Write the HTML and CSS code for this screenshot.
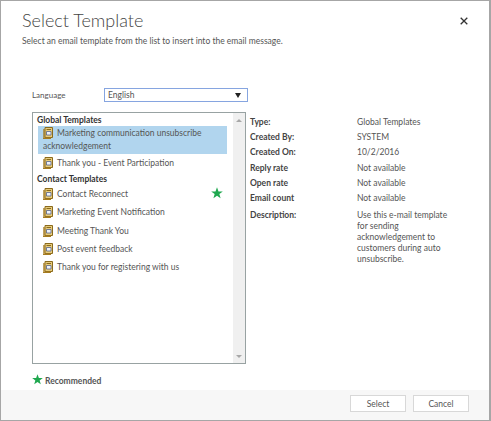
FILE: index.html
```html
<!DOCTYPE html>
<html lang="en">
<head>
    <meta charset="UTF-8">
    <title>Select Template</title>
    <link rel="stylesheet" href="styles.css">
</head>
<body>
    <svg width="0" height="0" class="defs">
        <symbol id="tpl" viewBox="0 0 10 12">
            <path d="M2 .5h7.500v10h-7.500z" fill="#e6cb7c" stroke="#8a6a1c"/>
            <path d="M3.500 2h4.500v1h-4.500z" fill="#8a6a1c"/>
            <path d="M3.500 4.500h4.500v3.500h-4.500z" fill="#eef2f8" stroke="#56638a" stroke-width=".8"/>
            <path d="M0 10.500h8v1.500h-8z" fill="#a67c20"/>
            <path d="M1 2v8.500" stroke="#a67c20" stroke-width="1.400"/>
        </symbol>
        <symbol id="star" viewBox="0 0 12 12">
            <path d="M6 .3l1.500 4.100h4.300l-3.450 2.600 1.250 4.300L6 8.700l-3.600 2.600 1.250-4.300L.2 4.400h4.300z" fill="#1fa84f"/>
        </symbol>
    </svg>
    <div class="dialog">
        <div class="main">
            <div class="head">
                <h1 class="title">Select Template</h1>
                <button class="close" type="button" aria-label="Close">
                    <svg width="8" height="8" viewBox="0 0 8 8"><path d="M.7 .7l6.600 6.600M7.300 .7L.7 7.300" stroke="#333" stroke-width="1.300"/></svg>
                </button>
            </div>
            <p class="sub">Select an email template from the list to insert into the email message.</p>
            <div class="lang">
                <span class="lang-label">Language</span>
                <div class="select"><span>English</span><span class="caret"></span></div>
            </div>
            <div class="columns">
                <div class="listbox">
                    <div class="list">
                        <div class="group">Global Templates</div>
                        <div class="item selected"><svg class="ico"><use href="#tpl"/></svg>Marketing communication unsubscribe acknowledgement</div>
                        <div class="item"><svg class="ico"><use href="#tpl"/></svg>Thank you - Event Participation</div>
                        <div class="group">Contact Templates</div>
                        <div class="item rec"><svg class="ico"><use href="#tpl"/></svg>Contact Reconnect<svg class="star-big"><use href="#star"/></svg></div>
                        <div class="item"><svg class="ico"><use href="#tpl"/></svg>Marketing Event Notification</div>
                        <div class="item"><svg class="ico"><use href="#tpl"/></svg>Meeting Thank You</div>
                        <div class="item"><svg class="ico"><use href="#tpl"/></svg>Post event feedback</div>
                        <div class="item"><svg class="ico"><use href="#tpl"/></svg>Thank you for registering with us</div>
                    </div>
                    <div class="scrollbar">
                        <span class="arrow up"></span>
                        <span class="arrow down"></span>
                    </div>
                </div>
                <div class="details">
                    <div class="key">Type:</div><div>Global Templates</div>
                    <div class="key">Created By:</div><div>SYSTEM</div>
                    <div class="key">Created On:</div><div>10/2/2016</div>
                    <div class="key">Reply rate</div><div>Not available</div>
                    <div class="key">Open rate</div><div>Not available</div>
                    <div class="key">Email count</div><div>Not available</div>
                    <div class="key desc-key">Description:</div>
                    <div class="desc">Use this e-mail template for sending acknowledgement to customers during auto unsubscribe.</div>
                </div>
            </div>
            <div class="legend"><svg class="star-legend"><use href="#star"/></svg><span>Recommended</span></div>
        </div>
        <div class="footer">
            <button class="btn" type="button">Select</button>
            <button class="btn" type="button">Cancel</button>
        </div>
    </div>
</body>
</html>
```

FILE: styles.css
```css
*{
    margin: 0;
    padding: 0;
    box-sizing: border-box;
}
html,body{
    height: 100%;
    background: #fff;
}
body{
    font-family: Lato, "Liberation Sans", sans-serif;
    font-size: 8.500px;
    color: #555;
}
.defs{
    position: absolute;
}
.dialog{
    width: 491px;
    height: 421px;
    border: 1px solid #a6a6a6;
    border-right-width: 2px;
    display: flex;
    flex-direction: column;
}
.main{
    flex: 1;
    padding: 0 0 0 21px;
    display: flex;
    flex-direction: column;
}
.head{
    height: 33px;
    padding-top: 6px;
    display: flex;
    justify-content: space-between;
}
.title{
    font-size: 18px;
    font-weight: 300;
    line-height: 27px;
    color: #444;
}
.close{
    width: 8px;
    height: 8px;
    margin: 10px 21px 0 0;
    border: 0;
    background: none;
    display: block;
}
.close svg{
    display: block;
}
.sub{
    line-height: 14px;
}
.lang{
    margin: 40px 0 0 10px;
    display: flex;
    align-items: center;
    height: 14px;
}
.lang-label{
    width: 72px;
    font-size: 8px;
}
.select{
    width: 144px;
    height: 14px;
    border: 1px solid #86a5e0;
    padding: 0 4px 0 3px;
    display: flex;
    align-items: center;
    justify-content: space-between;
}
.caret{
    width: 0;
    height: 0;
    border-left: 3px solid transparent;
    border-right: 3px solid transparent;
    border-top: 5px solid #222;
    margin-right: 2px;
}
.columns{
    margin: 10px 0 0 10px;
    display: flex;
    height: 252px;
}
.listbox{
    width: 214px;
    border: 1px solid #98a2a2;
    display: flex;
}
.list{
    flex: 1;
    padding-left: 4px;
}
.group{
    font-weight: 700;
    line-height: 15px;
    height: 13px;
    color: #333;
}
.item{
    line-height: 19px;
    height: 18.200px;
    margin: 0 6px 0 1px;
    padding-left: 5px;
    position: relative;
}
.selected{
    background: #b1d5ee;
    height: 28px;
    line-height: 13px;
    padding-top: 1px;
}
.ico{
    width: 10px;
    height: 12px;
    margin-right: 4px;
    vertical-align: -3px;
}
.star-big{
    position: absolute;
    right: 4px;
    top: 2px;
    width: 12px;
    height: 12px;
}
.scrollbar{
    width: 12px;
    background: #f0f0f0;
    display: flex;
    flex-direction: column;
    justify-content: space-between;
    align-items: center;
    padding: 6px 0 5px;
}
.arrow{
    width: 0;
    height: 0;
    border-left: 3px solid transparent;
    border-right: 3px solid transparent;
}
.up{
    border-bottom: 3px solid #a8a8a8;
}
.down{
    border-top: 3px solid #a8a8a8;
}
.details{
    margin: 2.500px 0 0 4px;
    display: grid;
    grid-template-columns: 107px 92px;
    grid-auto-rows: 15.400px;
    line-height: 15px;
    align-content: start;
}
.key{
    font-weight: 700;
    color: #444;
}
.desc-key{
    padding-top: 1px;
}
.desc{
    grid-row: span 5;
    line-height: 11px;
    padding-top: 3px;
}
.legend{
    margin: 10px 0 0 10px;
    display: flex;
    align-items: flex-end;
    gap: 2px;
    font-weight: 700;
    line-height: 8px;
}
.star-legend{
    width: 11px;
    height: 11px;
}
.footer{
    height: 30px;
    background: #f7f7f7;
    display: flex;
    justify-content: flex-end;
    gap: 7px;
    padding: 5px 20px 0 0;
}
.btn{
    width: 56px;
    height: 17px;
    background: #fff;
    border: 1px solid #d8d8d8;
    font-family: inherit;
    font-size: 8.500px;
    color: #555;
}
```
